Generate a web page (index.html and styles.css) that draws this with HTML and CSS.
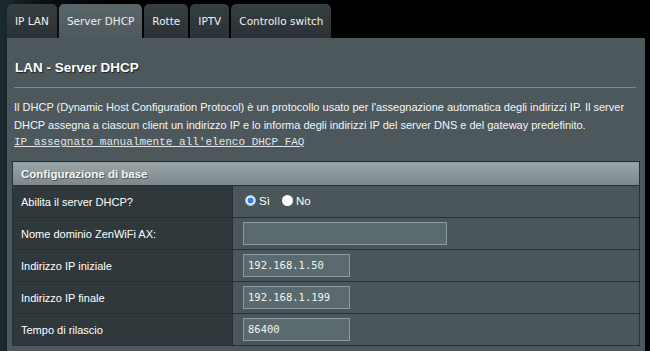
FILE: index.html
```html
<!DOCTYPE html>
<html lang="it">
<head>
  <meta charset="UTF-8">
  <title>LAN - Server DHCP</title>
  <link rel="stylesheet" href="styles.css">
</head>
<body>
  <div class="page">
    <div class="tabs">
      <div class="tab">IP LAN</div>
      <div class="tab active">Server DHCP</div>
      <div class="tab">Rotte</div>
      <div class="tab">IPTV</div>
      <div class="tab">Controllo switch</div>
    </div>

    <div class="panel">
      <div class="intro">
        <h1>LAN - Server DHCP</h1>
        <div class="sep"></div>
        <p>Il DHCP (Dynamic Host Configuration Protocol) è un protocollo usato per l'assegnazione automatica degli indirizzi IP. Il server DHCP assegna a ciascun client un indirizzo IP e lo informa degli indirizzi IP del server DNS e del gateway predefinito.</p>
        <a class="faq" href="#">IP assegnato manualmente all'elenco DHCP FAQ</a>
      </div>

      <table class="form-table">
        <thead>
          <tr><th colspan="2">Configurazione di base</th></tr>
        </thead>
        <tbody>
          <tr>
            <td class="label">Abilita il server DHCP?</td>
            <td class="value">
              <label class="radio-opt"><span class="radio checked"></span>Sì</label>
              <label class="radio-opt"><span class="radio"></span>No</label>
            </td>
          </tr>
          <tr>
            <td class="label">Nome dominio ZenWiFi AX:</td>
            <td class="value"><div class="field wide"></div></td>
          </tr>
          <tr>
            <td class="label">Indirizzo IP iniziale</td>
            <td class="value"><div class="field">192.168.1.50</div></td>
          </tr>
          <tr>
            <td class="label">Indirizzo IP finale</td>
            <td class="value"><div class="field">192.168.1.199</div></td>
          </tr>
          <tr>
            <td class="label">Tempo di rilascio</td>
            <td class="value"><div class="field">86400</div></td>
          </tr>
        </tbody>
      </table>
    </div>
  </div>
</body>
</html>
```

FILE: styles.css
```css
* {
  margin: 0;
  padding: 0;
  box-sizing: border-box;
}

html, body {
  height: 100%;
  overflow: hidden;
}

body {
  background: linear-gradient(to right, #1b2a30 0, #0b1215 40px, #000 120px);
  font-family: 'Liberation Sans', Arial, sans-serif;
  color: #fff;
}

.page {
  padding: 4px 5px 0 7px;
}

.tabs {
  display: flex;
  gap: 2px;
  height: 34px;
}

.tab {
  display: flex;
  align-items: center;
  padding: 0 8px;
  font-family: 'DejaVu Sans', Verdana, sans-serif;
  font-size: 10.5px;
  color: #eef0f0;
  background: linear-gradient(#353e41, #2b3235);
  border-radius: 5px 5px 0 0;
}

.tab.active {
  background: linear-gradient(#59666a, #4d595d);
}

.panel {
  background: #4c585c;
  height: 320px;
  padding: 0 5px;
}

.intro {
  padding: 20px 4px 0 2px;
}

h1 {
  font-size: 13.5px;
  font-weight: bold;
  line-height: 20px;
  padding-left: 1px;
  text-shadow: 1px 1px 1px #1a2225;
}

.sep {
  height: 1px;
  background: #7c888b;
  margin-top: 9px;
}

p {
  font-size: 11px;
  line-height: 18px;
  margin-top: 10px;
  color: #f4f6f6;
}

.faq {
  display: block;
  font-family: 'Liberation Mono', 'Courier New', monospace;
  font-size: 11px;
  line-height: 16px;
  color: #e2e6e7;
  text-decoration: underline;
}

.form-table {
  width: 100%;
  margin-top: 11px;
  border-collapse: collapse;
  border: 1px solid #283134;
}

.form-table th {
  height: 24px;
  text-align: left;
  padding-left: 8px;
  font-size: 11.5px;
  font-weight: bold;
  color: #f4f6f6;
  background: linear-gradient(#9ba6a9, #7b878b);
  text-shadow: 1px 1px 1px #4a5558;
}

.form-table td {
  height: 32px;
  border-top: 1px solid #263033;
  font-size: 11px;
}

.label {
  width: 220px;
  padding-left: 8px;
  background: #2f393c;
  border-right: 1px solid #263033;
}

.value {
  padding-left: 10px;
  background: #4a565a;
}

.radio-opt {
  display: inline-flex;
  align-items: center;
  gap: 3px;
  margin-right: 7px;
  font-size: 11.5px;
}

.radio {
  width: 11px;
  height: 11px;
  border-radius: 50%;
  background: #fff;
  margin-left: 2px;
}

.radio.checked {
  background: #3579e0;
  box-shadow: inset 0 0 0 1.5px #fff;
  border: 1px solid #b7c9e6;
}

.field {
  width: 107px;
  height: 23px;
  background: #5b6a6e;
  border: 1px solid #8c9a9d;
  padding-left: 4px;
  font-family: 'DejaVu Sans Mono', 'Lucida Console', monospace;
  font-size: 10.5px;
  line-height: 21px;
  color: #f2f4f4;
}

.field.wide {
  width: 204px;
}
```
